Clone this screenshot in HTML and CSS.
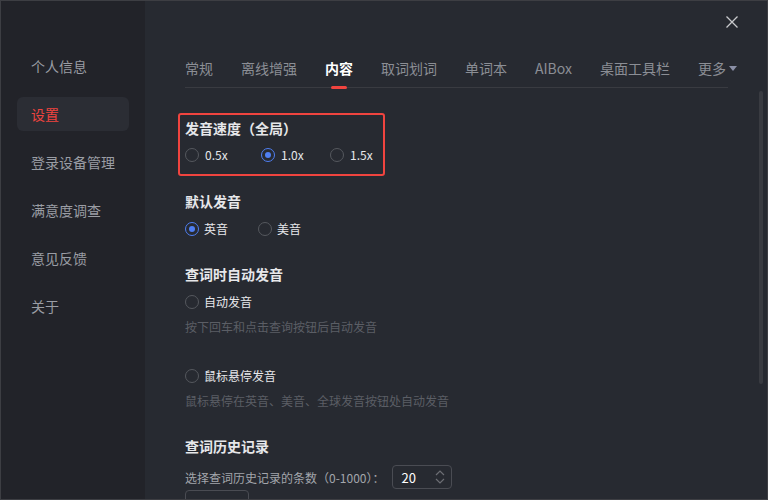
FILE: index.html
```html
<!DOCTYPE html>
<html lang="zh-CN">
<head>
    <meta charset="UTF-8">
    <title>设置</title>
    <link rel="stylesheet" href="styles.css">
</head>
<body>
    <div class="window">
        <!-- Left menu -->
        <div class="sidebar">
            <div class="side-item">个人信息</div>
            <div class="side-item active">设置</div>
            <div class="side-item">登录设备管理</div>
            <div class="side-item">满意度调查</div>
            <div class="side-item">意见反馈</div>
            <div class="side-item">关于</div>
        </div>

        <div class="main">
            <div class="top-bar">
                <svg class="close-btn" width="14" height="14" viewBox="0 0 14 14">
                    <path d="M1.5 1.5 L12.5 12.5 M12.5 1.5 L1.5 12.5" stroke="#c9cacd" stroke-width="1.3" fill="none"/>
                </svg>
            </div>

            <div class="tabs">
                <div class="tab">常规</div>
                <div class="tab">离线增强</div>
                <div class="tab active">内容</div>
                <div class="tab">取词划词</div>
                <div class="tab">单词本</div>
                <div class="tab">AIBox</div>
                <div class="tab">桌面工具栏</div>
                <div class="tab more">更多 <span class="caret"></span></div>
            </div>

            <div class="content">
                <div class="group highlight">
                    <div class="group-title">发音速度（全局）</div>
                    <div class="radio-row speed">
                        <label class="radio w76"><span class="dot"></span>0.5x</label>
                        <label class="radio w69 checked"><span class="dot"></span>1.0x</label>
                        <label class="radio"><span class="dot"></span>1.5x</label>
                    </div>
                </div>

                <div class="group first">
                    <div class="group-title">默认发音</div>
                    <div class="radio-row">
                        <label class="radio checked"><span class="dot"></span>英音</label>
                        <label class="radio"><span class="dot"></span>美音</label>
                    </div>
                </div>

                <div class="group">
                    <div class="group-title">查词时自动发音</div>
                    <div class="radio-row">
                        <label class="radio"><span class="dot"></span>自动发音</label>
                    </div>
                    <div class="desc">按下回车和点击查询按钮后自动发音</div>
                    <div class="radio-row spaced">
                        <label class="radio"><span class="dot"></span>鼠标悬停发音</label>
                    </div>
                    <div class="desc">鼠标悬停在英音、美音、全球发音按钮处自动发音</div>
                </div>

                <div class="group">
                    <div class="group-title">查词历史记录</div>
                    <div class="history-row">
                        <span class="history-label">选择查词历史记录的条数（0-1000）：</span>
                        <div class="spinbox">
                            <span>20</span>
                            <svg width="10" height="14" viewBox="0 0 10 14">
                                <path d="M1 5 L5 1 L9 5 M1 9 L5 13 L9 9" stroke="#6c6e74" stroke-width="1.2" fill="none"/>
                            </svg>
                        </div>
                    </div>
                    <div class="clear-btn"></div>
                </div>
            </div>

            <div class="scrollbar"></div>
        </div>
    </div>
</body>
</html>
```

FILE: styles.css
```css
:root {
    --side-bg: #222329;
    --main-bg: #272a31;
    --frame: #3d3e43;
    --line: #393b41;
    --red: #f0443f;
    --blue: #4f7ff2;
    --text: #e6e7ea;
    --muted: #9a9da4;
    --dim: #5b5e65;
}

* {
    box-sizing: border-box;
    margin: 0;
    padding: 0;
}

body {
    font-family: "Noto Sans CJK SC", "Noto Sans", sans-serif;
    background: var(--main-bg);
}

.window {
    width: 768px;
    height: 500px;
    border: 1px solid var(--frame);
    display: flex;
    overflow: hidden;
}

.sidebar {
    flex: none;
    width: 144px;
    background: var(--side-bg);
    padding: 48px 0 0 16px;
    display: flex;
    flex-direction: column;
    gap: 14px;
}

.side-item {
    width: 112px;
    height: 34px;
    line-height: 34px;
    padding-left: 14px;
    font-size: 14px;
    color: var(--muted);
    border-radius: 6px;
}

.side-item.active {
    background: #2b2d34;
    color: var(--red);
}

.main {
    flex: 1;
    min-width: 0;
    position: relative;
    padding: 0 39px 0 40px;
}

.top-bar {
    height: 42px;
    display: flex;
    justify-content: flex-end;
    align-items: center;
    margin-right: -11px;
}

.tabs {
    display: flex;
    gap: 28px;
    margin-top: 15px;
    padding-bottom: 9px;
    border-bottom: 1px solid var(--line);
}

.tab {
    position: relative;
    font-size: 14px;
    line-height: 20px;
    color: #8b8e95;
    white-space: nowrap;
}

.tab.active {
    color: #fff;
    font-weight: bold;
}

.tab.active::after {
    content: "";
    position: absolute;
    left: 6px;
    right: 6px;
    bottom: -11px;
    height: 3px;
    border-radius: 2px;
    background: var(--red);
}

.tab.more {
    display: flex;
    align-items: center;
    gap: 3px;
}

.caret {
    width: 0;
    height: 0;
    border-left: 4px solid transparent;
    border-right: 4px solid transparent;
    border-top: 5px solid #8a8fa6;
}

.content {
    padding-top: 25px;
}

.group {
    margin-top: 25px;
}

.group.first {
    margin-top: 15px;
}

.group.highlight {
    margin: 0 0 0 -7px;
    width: 207px;
    border: 2px solid var(--red);
    border-radius: 3px;
    padding: 3px 0 9px 5px;
}

.group-title {
    font-size: 14px;
    line-height: 20px;
    font-weight: bold;
    color: var(--text);
}

.radio-row {
    display: flex;
    gap: 30px;
    margin-top: 8px;
}

.radio-row.speed {
    gap: 0;
    margin-top: 7px;
}

.radio-row.spaced {
    margin-top: 29px;
}

.radio {
    display: flex;
    align-items: center;
    gap: 5px;
    font-size: 12px;
    line-height: 20px;
    color: var(--text);
}

.speed .radio {
    flex: none;
    gap: 6px;
}

.speed .w76 {
    width: 76px;
}

.speed .w69 {
    width: 69px;
}

.dot {
    width: 14px;
    height: 14px;
    border: 1px solid #55585e;
    border-radius: 50%;
    display: flex;
    align-items: center;
    justify-content: center;
}

.radio.checked .dot {
    border-color: var(--blue);
}

.radio.checked .dot::after {
    content: "";
    width: 6px;
    height: 6px;
    border-radius: 50%;
    background: var(--blue);
}

.desc {
    margin-top: 5px;
    font-size: 12px;
    line-height: 20px;
    color: var(--dim);
}

.history-row {
    display: flex;
    align-items: center;
    gap: 8px;
    margin-top: 9px;
}

.history-label {
    font-size: 12px;
    color: #a3a6ac;
}

.spinbox {
    width: 60px;
    height: 24px;
    border: 1px solid #4a4c53;
    border-radius: 4px;
    display: flex;
    align-items: center;
    justify-content: space-between;
    padding: 0 6px 0 8px;
    font-size: 13px;
    color: #fff;
}

.clear-btn {
    width: 64px;
    height: 30px;
    margin-top: 1px;
    border: 1px solid #4a4c53;
    border-radius: 4px;
}

.scrollbar {
    position: absolute;
    right: 4px;
    top: 90px;
    width: 4px;
    height: 293px;
    border-radius: 2px;
    background: var(--line);
}
```
